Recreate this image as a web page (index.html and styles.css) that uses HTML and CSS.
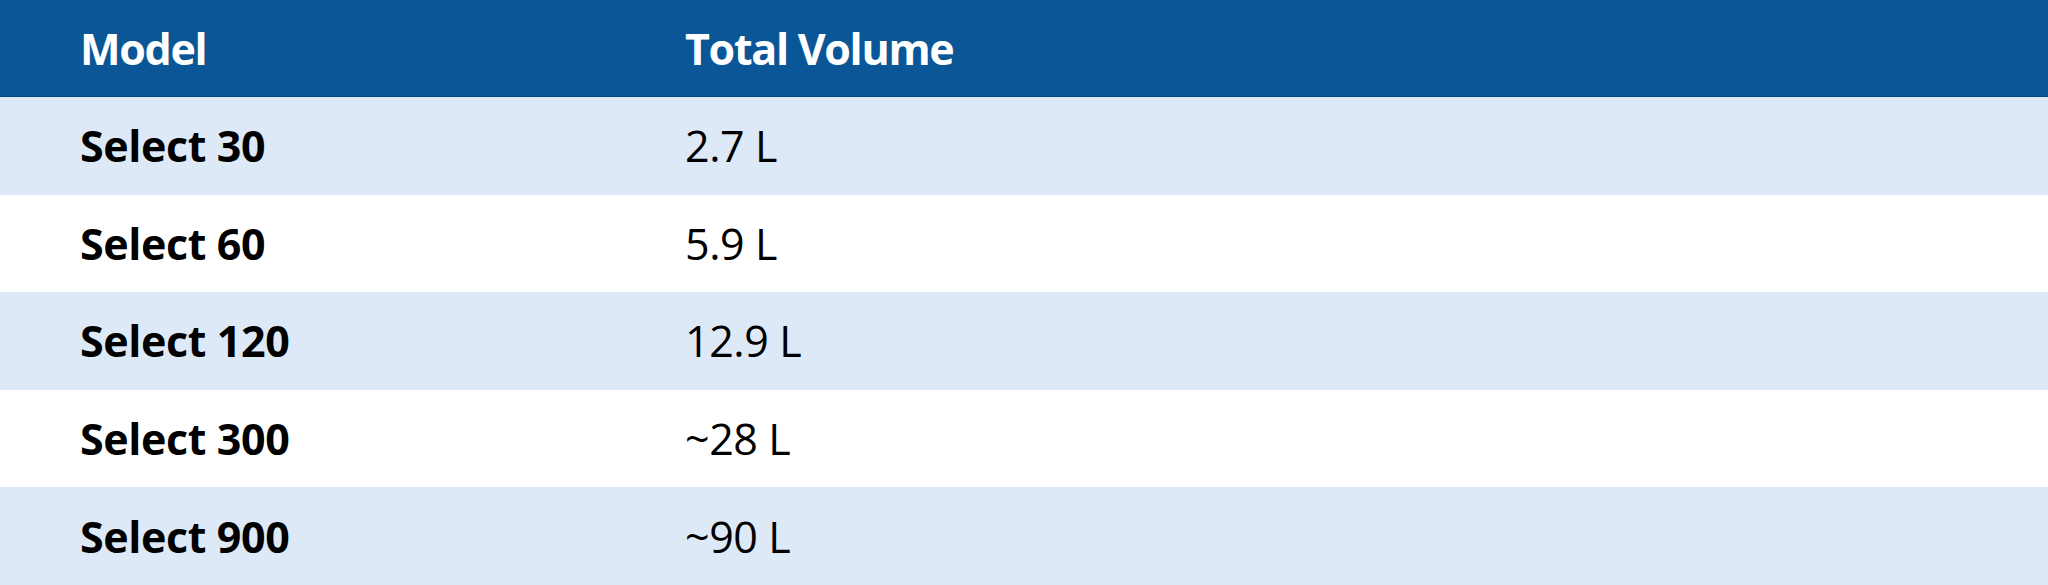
FILE: index.html
```html
<!DOCTYPE html>
<html lang="en">
<head>
<meta charset="utf-8">
<title>Models</title>
<link rel="stylesheet" href="styles.css">
</head>
<body>
<div class="table">
  <div class="row head">
    <div class="cell">Model</div>
    <div class="cell">Total Volume</div>
  </div>
  <div class="row alt">
    <div class="cell model">Select 30</div>
    <div class="cell">2.7 L</div>
  </div>
  <div class="row">
    <div class="cell model">Select 60</div>
    <div class="cell">5.9 L</div>
  </div>
  <div class="row alt">
    <div class="cell model">Select 120</div>
    <div class="cell">12.9 L</div>
  </div>
  <div class="row">
    <div class="cell model">Select 300</div>
    <div class="cell">~28 L</div>
  </div>
  <div class="row alt">
    <div class="cell model">Select 900</div>
    <div class="cell">~90 L</div>
  </div>
</div>
</body>
</html>
```
FILE: styles.css
```css
html, body {
  margin: 0;
  padding: 0;
  background: #ffffff;
}
body {
  font-family: "Open Sans", "Noto Sans", sans-serif;
  color: #000000;
}
.table {
  display: flex;
  flex-direction: column;
  width: 2048px;
}
.row {
  display: grid;
  grid-template-columns: 605px 1fr;
  height: 97.6px;
  align-items: center;
  background: #ffffff;
}
.row.alt {
  background: #dde9f7;
}
.row.head {
  height: 96px;
  background: #0a5696;
  border-bottom: 1px solid #07477f;
  color: #ffffff;
  font-weight: 700;
}
.cell {
  padding-left: 80px;
  font-size: 43px;
  letter-spacing: -0.4px;
  white-space: nowrap;
}
.row.head .cell {
  letter-spacing: -1.3px;
}
.model {
  font-weight: 700;
}
```
